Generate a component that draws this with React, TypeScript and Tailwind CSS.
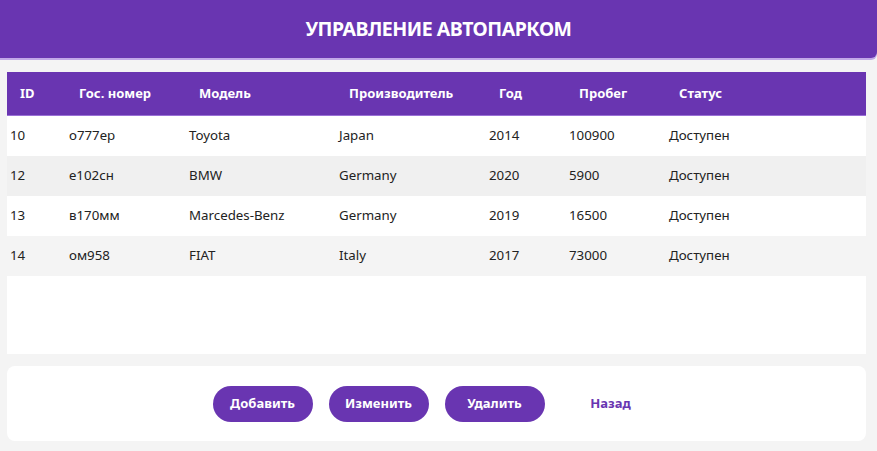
import React from "react";

const cars = [
  { id: 10, plate: "о777ер", model: "Toyota", maker: "Japan", year: 2014, mileage: 100900, status: "Доступен" },
  { id: 12, plate: "е102сн", model: "BMW", maker: "Germany", year: 2020, mileage: 5900, status: "Доступен" },
  { id: 13, plate: "в170мм", model: "Marcedes-Benz", maker: "Germany", year: 2019, mileage: 16500, status: "Доступен" },
  { id: 14, plate: "ом958", model: "FIAT", maker: "Italy", year: 2017, mileage: 73000, status: "Доступен" },
];

const rowBg = ["bg-white", "bg-[#f0f0f0]", "bg-white", "bg-[#f4f4f4]"];

// column widths taken from the layout
const cols = ["w-[59px]", "w-[120px]", "w-[150px]", "w-[150px]", "w-[80px]", "w-[100px]", "flex-1"];

export default function App() {
  const headers = ["ID", "Гос. номер", "Модель", "Производитель", "Год", "Пробег", "Статус"];

  return (
    <div className="min-h-screen bg-[#f4f4f4] font-['Noto_Sans',sans-serif] text-[#222]">
      <header className="h-[58px] bg-[#6935b1] rounded-br-md shadow-[0_2px_0_#c2a8e8] flex items-center justify-center">
        <h1 className="text-white text-[19.5px] font-bold tracking-tight">УПРАВЛЕНИЕ АВТОПАРКОМ</h1>
      </header>

      <div className="pl-[7px] pr-[11px] pt-[14px]">
        <div className="bg-white h-[282px]">
          <div className="flex h-[44px] bg-[#6935b1] border-b border-[#9a70d6] text-white text-[13px] font-bold items-center">
            {headers.map((h, i) => (
              <div key={h} className={`${cols[i]} pl-[13px]`}>
                {h}
              </div>
            ))}
          </div>
          {cars.map((c, r) => (
            <div key={c.id} className={`flex h-[40px] items-center text-[13.3px] ${rowBg[r]}`}>
              {[c.id, c.plate, c.model, c.maker, c.year, c.mileage, c.status].map((v, i) => (
                <div key={i} className={`${cols[i]} pl-[3px]`}>
                  {v}
                </div>
              ))}
            </div>
          ))}
        </div>
      </div>

      <div className="pl-[7px] pr-[11px] pt-[12px]">
        <div className="bg-white rounded-lg h-[75px] flex items-center justify-center gap-[16px]">
          {["Добавить", "Изменить", "Удалить"].map((b) => (
            <button key={b} className="w-[100px] h-[36px] rounded-full bg-[#6935b1] text-white text-[13px] font-bold">
              {b}
            </button>
          ))}
          <button className="w-[100px] h-[36px] text-[#6935b1] text-[13px] font-bold">Назад</button>
        </div>
      </div>
    </div>
  );
}
